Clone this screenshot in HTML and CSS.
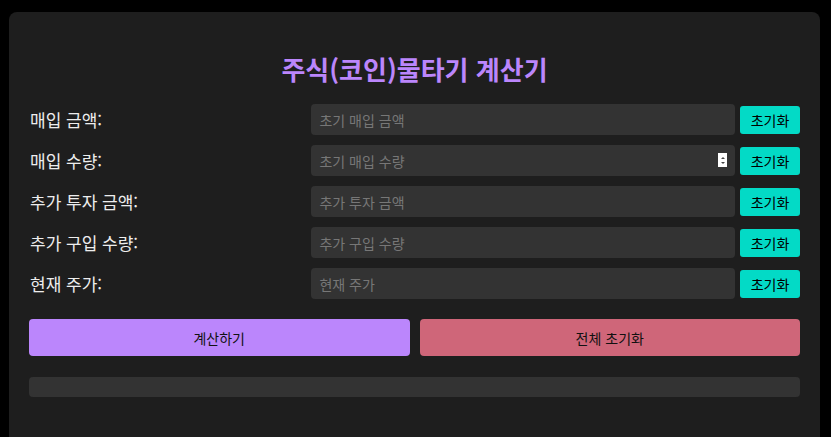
FILE: index.html
```html
<!DOCTYPE html>
<html lang="ko">
<head>
<meta charset="utf-8">
<title>주식(코인)물타기 계산기</title>
<link rel="stylesheet" href="styles.css">
</head>
<body>
<div class="container">
  <h1 class="title">주식(코인)물타기 계산기</h1>
  <div class="row">
    <label class="label">매입 금액:</label>
    <div class="field"><input class="input" type="number" placeholder="초기 매입 금액"></div>
    <button class="reset">초기화</button>
  </div>
  <div class="row">
    <label class="label">매입 수량:</label>
    <div class="field"><input class="input" type="number" placeholder="초기 매입 수량"><span class="spin"><span class="up"></span><span class="down"></span></span></div>
    <button class="reset">초기화</button>
  </div>
  <div class="row">
    <label class="label">추가 투자 금액:</label>
    <div class="field"><input class="input" type="number" placeholder="추가 투자 금액"></div>
    <button class="reset">초기화</button>
  </div>
  <div class="row">
    <label class="label">추가 구입 수량:</label>
    <div class="field"><input class="input" type="number" placeholder="추가 구입 수량"></div>
    <button class="reset">초기화</button>
  </div>
  <div class="row">
    <label class="label">현재 주가:</label>
    <div class="field"><input class="input" type="number" placeholder="현재 주가"></div>
    <button class="reset">초기화</button>
  </div>
  <div class="actions">
    <button class="btn btn-calc">계산하기</button>
    <button class="btn btn-clear">전체 초기화</button>
  </div>
  <div class="result"></div>
</div>
</body>
</html>
```

FILE: styles.css
```css
html, body {
  margin: 0;
  background: #000;
}
body {
  padding: 12px 11px 0 9px;
  font-family: "Noto Sans CJK KR", "Noto Sans", sans-serif;
  color: #e0e0e0;
  height: 437px;
  box-sizing: border-box;
  overflow: hidden;
}
.container {
  background: #1e1e1e;
  border-radius: 8px;
  padding: 20px 20px 60px;
}
.title {
  margin: 19px 0 17px;
  height: 36px;
  line-height: 36px;
  text-align: center;
  color: #bb86fc;
  font-size: 26px;
  font-weight: 700;
}
.row {
  display: flex;
  align-items: center;
  height: 31px;
  margin-bottom: 10px;
}
.label {
  flex: 2;
  font-size: 17px;
  text-indent: 1px;
  color: #ededed;
}
.field {
  flex: 3;
  position: relative;
  height: 31px;
}
.input {
  width: 100%;
  height: 31px;
  box-sizing: border-box;
  border: none;
  border-radius: 4px;
  background: #333;
  color: #e0e0e0;
  padding: 0 8px;
  font-family: inherit;
  font-size: 14px;
  outline: none;
  -moz-appearance: textfield;
}
.input::placeholder {
  color: #777;
}
.input::-webkit-outer-spin-button,
.input::-webkit-inner-spin-button {
  -webkit-appearance: none;
  margin: 0;
}
.spin {
  position: absolute;
  right: 8px;
  top: 8px;
  width: 9px;
  height: 14px;
  background: #fff;
  display: flex;
  flex-direction: column;
  align-items: center;
  justify-content: center;
  gap: 3px;
}
.up, .down {
  width: 0;
  height: 0;
  border-left: 2px solid transparent;
  border-right: 2px solid transparent;
}
.up { border-bottom: 2px solid #444; }
.down { border-top: 2px solid #444; }
.reset {
  margin-left: 5px;
  width: 60px;
  height: 28px;
  border: none;
  border-radius: 3px;
  background: #03dac6;
  color: #000;
  font-family: inherit;
  font-size: 14px;
  padding: 0;
}
.actions {
  display: flex;
  gap: 10px;
  margin-top: 20px;
}
.btn {
  flex: 1;
  height: 37px;
  border: none;
  border-radius: 4px;
  color: #111;
  font-family: inherit;
  font-size: 14px;
}
.btn-calc { background: #bb86fc; }
.btn-clear { background: #cf6679; }
.result {
  margin-top: 21px;
  height: 20px;
  background: #333;
  border-radius: 4px;
}
```
